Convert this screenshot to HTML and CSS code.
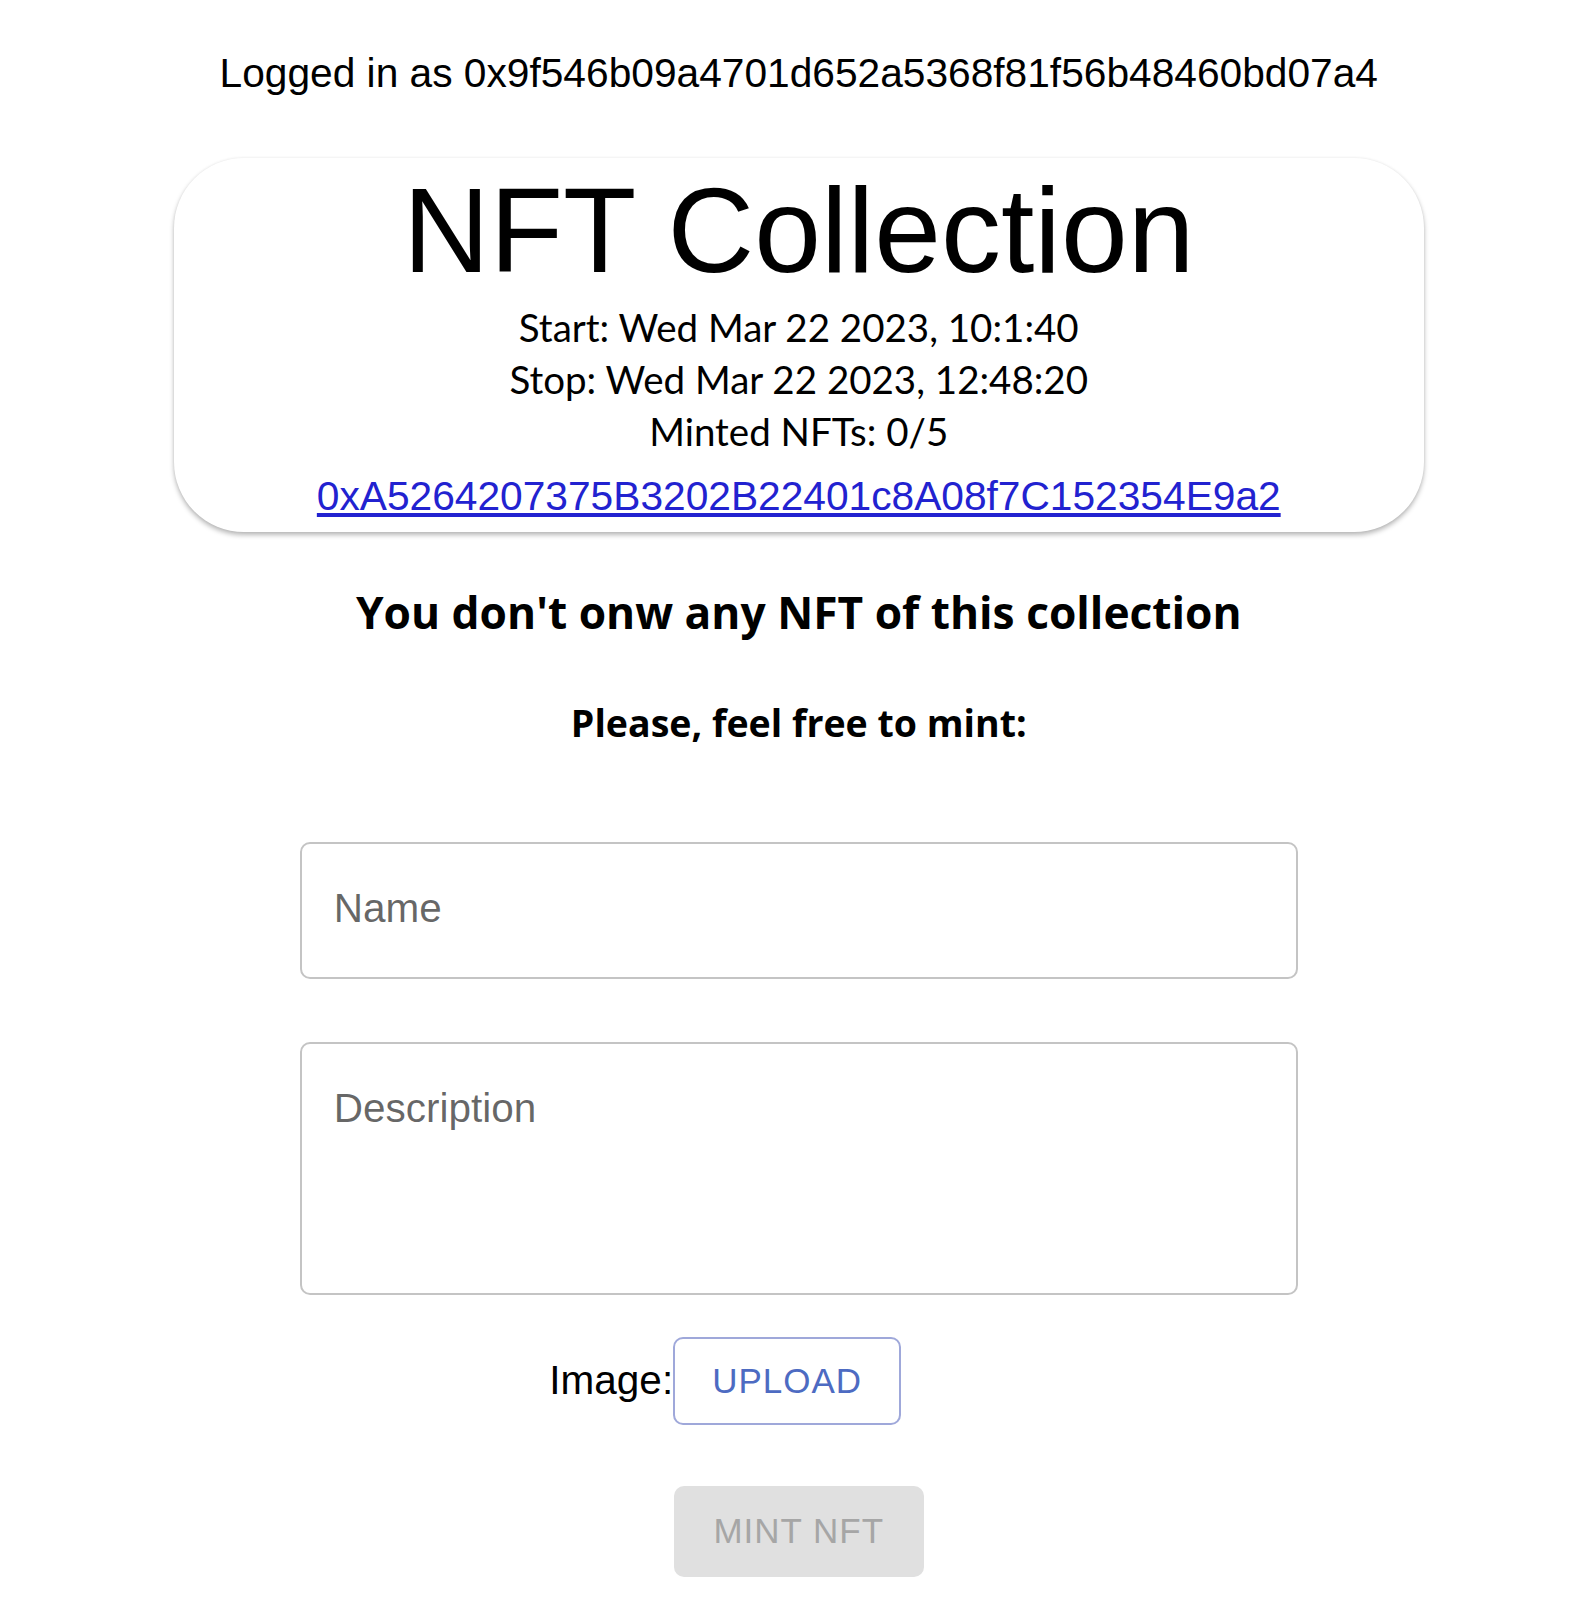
FILE: index.html
```html
<!DOCTYPE html>
<html lang="en">
<head>
<meta charset="utf-8">
<title>NFT Collection</title>
<link rel="stylesheet" href="styles.css">
</head>
<body>
<div class="app">
  <p class="login">Logged in as 0x9f546b09a4701d652a5368f81f56b48460bd07a4</p>
  <section class="card">
    <h1 class="title">NFT Collection</h1>
    <p class="info">Start: Wed Mar 22 2023, 10:1:40</p>
    <p class="info">Stop: Wed Mar 22 2023, 12:48:20</p>
    <p class="info">Minted NFTs: 0/5</p>
    <a class="contract" href="#">0xA5264207375B3202B22401c8A08f7C152354E9a2</a>
  </section>
  <h2 class="notice">You don't onw any NFT of this collection</h2>
  <h3 class="cta">Please, feel free to mint:</h3>
  <form class="mint-form">
    <div class="field">
      <input class="field-input" type="text" placeholder="Name">
    </div>
    <div class="field field-multi">
      <textarea class="field-input field-area" placeholder="Description"></textarea>
    </div>
    <div class="image-row">
      <span class="image-label">Image:</span>
      <button class="btn-upload" type="button">UPLOAD</button>
      <span class="file-name"></span>
    </div>
    <button class="btn-mint" type="button" disabled>MINT NFT</button>
  </form>
</div>
</body>
</html>
```

FILE: styles.css
```css
html, body {
  margin: 0;
  padding: 0;
  background: #ffffff;
}

body {
  font-family: "Liberation Sans", Arial, sans-serif;
  color: #000000;
}

.app {
  display: flex;
  flex-direction: column;
  align-items: center;
  padding: 0 0 40px 4.5px;
}

.login {
  margin: 50px 0 0;
  font-size: 40.7px;
  line-height: 47px;
  text-align: center;
}

.card {
  box-sizing: border-box;
  width: 1250px;
  margin-top: 61px;
  padding: 2px 0 12.5px;
  border-radius: 70px;
  background: #ffffff;
  box-shadow: 0 3px 5px rgba(0, 0, 0, 0.28), 0 0 3px rgba(0, 0, 0, 0.06);
  display: flex;
  flex-direction: column;
  align-items: center;
  text-align: center;
}

.title {
  margin: 0;
  font-family: "Liberation Sans", Arial, sans-serif;
  font-weight: normal;
  font-size: 120px;
  line-height: 140px;
}

.info {
  margin: 0;
  font-family: Lato, "Open Sans", sans-serif;
  font-size: 38.5px;
  line-height: 52px;
}

.title + .info {
  margin-top: 1px;
}

.contract {
  display: block;
  margin-top: 15.5px;
  font-family: "Liberation Sans", Arial, sans-serif;
  font-size: 40.7px;
  line-height: 47px;
  color: #2222d0;
  text-decoration: underline;
}

.notice {
  margin: 49.6px 0 0;
  font-family: "Open Sans", Lato, sans-serif;
  font-weight: bold;
  font-size: 44.3px;
  line-height: 60px;
  text-align: center;
}

.cta {
  margin: 57.4px 0 0;
  font-family: "Open Sans", Lato, sans-serif;
  font-weight: bold;
  font-size: 37.5px;
  line-height: 48px;
  text-align: center;
}

.mint-form {
  margin-top: 95px;
  display: flex;
  flex-direction: column;
  align-items: center;
}

.field {
  box-sizing: border-box;
  width: 998px;
  height: 137px;
  border: 2px solid #c4c4c4;
  border-radius: 10px;
  display: flex;
}

.field-multi {
  height: 253px;
  margin-top: 63px;
}

.field-input {
  box-sizing: border-box;
  width: 100%;
  border: 0;
  outline: none;
  background: transparent;
  margin: 0;
  padding: 41.5px 32px 0;
  font-family: "Liberation Sans", Arial, sans-serif;
  font-size: 40.5px;
  line-height: 47px;
  height: 88.5px;
  color: #000000;
}

.field-area {
  height: 100%;
  resize: none;
}

.field-input::placeholder {
  color: rgba(0, 0, 0, 0.6);
  opacity: 1;
}

.image-row {
  margin-top: 42px;
  display: flex;
  align-items: center;
  justify-content: center;
}

.image-label {
  font-size: 40.5px;
  line-height: 47px;
}

.file-name {
  width: 147px;
}

.btn-upload {
  box-sizing: border-box;
  width: 228px;
  height: 88px;
  margin: 0;
  padding: 0;
  border: 2px solid rgba(63, 81, 181, 0.5);
  border-radius: 10px;
  background: #ffffff;
  color: #4d6bc2;
  font-family: "Liberation Sans", Arial, sans-serif;
  font-size: 35px;
  letter-spacing: 1px;
  line-height: 40px;
}

.btn-mint {
  box-sizing: border-box;
  width: 250px;
  height: 91px;
  margin: 61px 0 0;
  padding: 0;
  border: 0;
  border-radius: 10px;
  background: #e0e0e0;
  color: #a6a6a6;
  font-family: "Liberation Sans", Arial, sans-serif;
  font-size: 35px;
  letter-spacing: 1px;
  line-height: 40px;
}
```
